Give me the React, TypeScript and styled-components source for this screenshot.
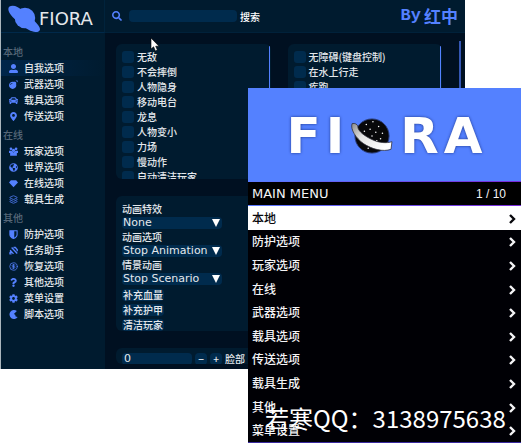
import React from "react";
import styled, { createGlobalStyle } from "styled-components";
import {
  FaUserAlt, FaBomb, FaCar, FaMapMarkerAlt, FaGlobeAmericas,
  FaQuestion, FaCog, FaSearch,
} from "react-icons/fa";
import { Layers, CircleDollarSign } from "lucide-react";

const accent = "#5481ff";
const panelBg = "#001b2f";
const fieldBg = "#002b4d";
const cjk = `"Noto Sans CJK SC", sans-serif`;
const latin = `"DejaVu Sans", "Noto Sans CJK SC", sans-serif`;

const GlobalStyle = createGlobalStyle`
  * { box-sizing: border-box; }
  body { margin: 0; background: #fff; font-family: ${cjk}; }
  button, input, select { font: inherit; color: inherit; border: 0; margin: 0; padding: 0; }
  ul { list-style: none; margin: 0; padding: 0; }
`;

const Page = styled.div`
  position: relative;
  min-height: 444px;
`;

const AppWindow = styled.div`
  display: grid;
  grid-template-columns: 104px 1fr;
  grid-template-rows: 33px auto;
  margin-right: 57px;
  border-left: 1px solid #aab6bd;
  background: #001021;
  color: #e4e8ec;
  font-size: 10px;
  font-weight: 500;
`;

const Brand = styled.div`
  display: flex;
  align-items: center;
  background: ${panelBg};
  border-right: 1px solid #00233c;
  border-bottom: 1px solid #00294a;
  padding: 5px 0 0 5px;
`;

const BrandPlanet = styled.svg`
  width: 36px;
  height: 28px;
  flex: none;
`;

const BrandName = styled.span`
  font: 400 18px/26px ${latin};
  margin-left: -3px;
  padding-top: 1px;
`;

const TopBar = styled.header`
  display: flex;
  align-items: center;
  background: ${panelBg};
  border-bottom: 1px solid #00213a;
  padding: 0 7px;
`;

const Search = styled.label`
  display: flex;
  align-items: center;
  flex: 1;
  color: #fff;
  svg { color: ${accent}; width: 10px; height: 10px; margin-right: 7px; }
`;

const SearchInput = styled.input`
  width: 108px;
  height: 12px;
  border-radius: 4px;
  background: ${fieldBg};
  margin-right: 3px;
`;

const Author = styled.div`
  display: flex;
  align-items: center;
  gap: 3px;
  color: ${accent};
  font: 700 17px/24px ${cjk};
  b { font: 700 17px/24px "Liberation Mono", monospace; }
`;

const Sidebar = styled.nav`
  display: flex;
  flex-direction: column;
  gap: 3px;
  background: ${panelBg};
  padding: 11px 0 20px;
`;

const GroupTitle = styled.div`
  height: 16px;
  line-height: 16px;
  padding-left: 2px;
  color: #566778;
`;

const NavItem = styled.button<{ $active?: boolean }>`
  display: flex;
  align-items: center;
  gap: 6px;
  width: 100%;
  height: 16px;
  line-height: 16px;
  padding-left: 8px;
  background: ${(p) => (p.$active ? "linear-gradient(90deg, #00264a, #001b2f)" : "transparent")};
  text-align: left;
  svg { color: ${accent}; width: 9px; height: 9px; flex: none; }
`;

const Content = styled.main`
  display: grid;
  grid-template-columns: 1fr 1fr 2px;
  column-gap: 17px;
  padding: 11px 4px 5px 11px;
`;

const Column = styled.div`
  display: flex;
  flex-direction: column;
  gap: 17px;
  min-width: 0;
`;

const ScrollTrack = styled.div`
  background: #3557b4;
  margin-top: -3px;
`;

const Panel = styled.section<{ $max: number; $scroll?: boolean }>`
  height: ${(p) => p.$max}px;
  overflow: hidden;
  background: ${panelBg};
  border-radius: 6px;
  padding: 5px 2px 0 6px;
  background-image: ${(p) => (p.$scroll ? `linear-gradient(${accent}, ${accent})` : "none")};
  background-size: 1px calc(100% - 4px);
  background-position: right 1px top 2px;
  background-repeat: no-repeat;
`;

const CheckRow = styled.label`
  display: flex;
  align-items: center;
  gap: 3px;
  height: 15px;
  line-height: 15px;
`;

const Check = styled.input`
  appearance: none;
  width: 12px;
  height: 12px;
  border-radius: 3px;
  background: ${fieldBg};
  &:checked { background: ${accent}; }
`;

const Field = styled.label`
  display: flex;
  flex-direction: column;
  line-height: 16px;
`;

const SelectBox = styled.span`
  display: grid;
  align-items: center;
  width: 100px;
  svg { grid-area: 1 / 1; justify-self: end; width: 8px; height: 8px; margin-right: 2px; pointer-events: none; }
`;

const Select = styled.select`
  grid-area: 1 / 1;
  appearance: none;
  width: 100%;
  height: 12px;
  padding-left: 1px;
  border-radius: 4px;
  background: ${fieldBg};
  font: 11px/12px ${latin};
`;

const Actions = styled.div`
  display: flex;
  flex-direction: column;
  align-items: flex-start;
  gap: 3px;
  padding-top: 4px;
`;

const Action = styled.button`
  height: 12px;
  line-height: 12px;
  padding: 0 1px;
  border-radius: 4px;
  background: ${fieldBg};
`;

const Stepper = styled.label`
  display: flex;
  align-items: center;
  gap: 3px;
  line-height: 12px;
`;

const NumberInput = styled.input`
  width: 70px;
  height: 12px;
  padding-left: 2px;
  border-radius: 4px;
  background: ${fieldBg};
  font: 11px/12px ${latin};
`;

const StepButton = styled.button`
  width: 12px;
  height: 12px;
  line-height: 12px;
  border-radius: 4px;
  background: ${fieldBg};
`;

const Pointer = styled.svg`
  position: absolute;
  left: 150px;
  top: 37px;
  width: 10px;
  height: 15px;
`;

const Menu = styled.aside`
  position: absolute;
  top: 88px;
  left: 248px;
  right: 1px;
  background: #000005;
  color: #f4f4f6;
  border-bottom: 1px solid #3a2aa0;
`;

const Banner = styled.div`
  display: flex;
  align-items: center;
  justify-content: center;
  gap: 5px;
  height: 93px;
  padding-top: 3px;
  background: ${accent};
  color: #fff;
  font: 700 50px/60px ${latin};
  text-shadow: 0 0 3px #1c3486;
`;

const Planet = styled.svg`
  width: 46px;
  height: 38px;
`;

const MenuHead = styled.div`
  display: flex;
  justify-content: space-between;
  align-items: center;
  height: 25px;
  padding: 0 15px 0 4px;
  background: #000;
  border-style: solid;
  border-width: 1px 0;
  border-image: linear-gradient(90deg, #5a7bff, #7a2ad8) 1;
  font: 13px/20px ${latin};
`;

const Count = styled.span`
  font: 12px/20px "Liberation Sans", sans-serif;
`;

const MenuList = styled.ul`
  display: grid;
  grid-auto-rows: 1fr;
  height: 236px;
`;

const MenuItem = styled.button<{ $active?: boolean }>`
  display: flex;
  align-items: center;
  justify-content: space-between;
  width: 100%;
  height: 100%;
  padding: 0 5px 0 4px;
  background: ${(p) => (p.$active ? "#fff" : "transparent")};
  color: ${(p) => (p.$active ? "#08080c" : "inherit")};
  font: 500 12px/20px ${cjk};
  svg { width: 8px; height: 10px; margin-top: 2px; }
`;

const Contact = styled.div`
  position: absolute;
  left: 265px;
  top: 400px;
  color: #fff;
  font: 400 24px/36px ${cjk};
  white-space: nowrap;
`;

const Diamond = () => (
  <svg viewBox="0 0 12 12" fill="currentColor"><path d="M2.5 1.500h7L12 4.500 6 11 0 4.500z" /></svg>
);
const Crescent = () => (
  <svg viewBox="0 0 12 12" fill="currentColor">
    <path d="M10.5 1.400A6 6 0 1 0 11.600 9.400L8.800 8.500 8.300 6.400 6.500 5.300 8.200 3.500z" />
  </svg>
);
const Crowd = () => (
  <svg viewBox="0 0 12 12" fill="currentColor">
    <circle cx="2.600" cy="2.400" r="1.800" />
    <circle cx="9.400" cy="2.400" r="1.800" />
    <circle cx="6" cy="4.600" r="2.200" />
    <path d="M0 5h3.200L6 7.200 8.800 5H12v3h-1.500v3.500h-9V8H0z" />
  </svg>
);
const HalfShield = () => (
  <svg viewBox="0 0 12 12">
    <path d="M1.200 1h9.600v5c0 2.600-2 4.300-4.800 5.400C3.200 10.300 1.200 8.600 1.200 6z" fill="none" stroke="currentColor" strokeWidth="1.400" />
    <path d="M1.200 1H7v10L6 11.400C3.200 10.300 1.200 8.600 1.200 6z" fill="currentColor" />
  </svg>
);
const Helper = () => (
  <svg viewBox="0 0 12 12" fill="none" stroke="currentColor" strokeWidth="1.800">
    <path d="M3.500 2l7.500 8M6 2h2.500l2.500 3v2M1.500 5.500L6 10.500M.5 10.500h3M.8 10l1.500-3" />
  </svg>
);

const groups: { title: string; items: [string, React.ReactNode][] }[] = [
  {
    title: "本地",
    items: [["自我选项", <FaUserAlt />], ["武器选项", <FaBomb />], ["载具选项", <FaCar />], ["传送选项", <FaMapMarkerAlt />]],
  },
  {
    title: "在线",
    items: [["玩家选项", <Crowd />], ["世界选项", <FaGlobeAmericas />], ["在线选项", <Diamond />], ["载具生成", <Layers />]],
  },
  {
    title: "其他",
    items: [
      ["防护选项", <HalfShield />], ["任务助手", <Helper />], ["恢复选项", <CircleDollarSign />],
      ["其他选项", <FaQuestion />], ["菜单设置", <FaCog />], ["脚本选项", <Crescent />],
    ],
  },
];

const selfToggles = ["无敌", "不会摔倒", "人物隐身", "移动电台", "龙息", "人物变小", "力场", "慢动作", "自动清洁玩家"];
const moveToggles = ["无障碍(键盘控制)", "在水上行走", "疾跑"];
const selects = [["动画特效", "None"], ["动画选项", "Stop Animation"], ["情景动画", "Stop Scenario"]];
const actions = ["补充血量", "补充护甲", "清洁玩家"];
const menuItems = ["本地", "防护选项", "玩家选项", "在线", "武器选项", "载具选项", "传送选项", "载具生成", "其他", "菜单设置"];
const stars = [[18, 8], [25, 5], [31, 10], [22, 13], [28, 16], [35, 17], [16, 15], [33, 23], [24, 20], [29, 25], [20, 33]];

function Toggles({ items }: { items: string[] }) {
  return (
    <>
      {items.map((name) => (
        <CheckRow key={name}><Check type="checkbox" />{name}</CheckRow>
      ))}
    </>
  );
}

export default function App() {
  return (
    <Page>
      <GlobalStyle />
      <AppWindow>
        <Brand>
          <BrandPlanet viewBox="0 0 36 30" fill={accent}>
            <circle cx="19" cy="14" r="11" />
            <path d="M2 2C6-1 12 2 15 5L29 17C34 22 37 26 34 28C29 31 21 26 16 22L6 13C2 9 0 5 2 2Z" />
          </BrandPlanet>
          <BrandName>FIORA</BrandName>
        </Brand>
        <TopBar>
          <Search><FaSearch /><SearchInput type="text" />搜索</Search>
          <Author><b>By</b>红中</Author>
        </TopBar>
        <Sidebar>
          {groups.map((g, gi) => (
            <div key={g.title}>
              <GroupTitle>{g.title}</GroupTitle>
              {g.items.map(([name, icon], i) => (
                <NavItem key={name} $active={gi === 0 && i === 0}>{icon}{name}</NavItem>
              ))}
            </div>
          ))}
        </Sidebar>
        <Content>
          <Column>
            <Panel $max={135} $scroll><Toggles items={selfToggles} /></Panel>
            <Panel $max={135}>
              {selects.map(([label, value]) => (
                <Field key={label}>
                  {label}
                  <SelectBox>
                    <Select defaultValue={value}><option>{value}</option></Select>
                    <svg viewBox="0 0 8 8" fill="#fff"><path d="M0 0h8L4 8z" /></svg>
                  </SelectBox>
                </Field>
              ))}
              <Actions>
                {actions.map((a) => <Action key={a}>{a}</Action>)}
              </Actions>
            </Panel>
            <Panel $max={16}>
              <Stepper>
                <NumberInput type="text" defaultValue="0" />
                <StepButton>−</StepButton>
                <StepButton>+</StepButton>
                脸部
              </Stepper>
            </Panel>
          </Column>
          <Column>
            <Panel $max={135} $scroll><Toggles items={moveToggles} /></Panel>
          </Column>
          <ScrollTrack />
        </Content>
      </AppWindow>
      <Pointer viewBox="0 0 10 15" fill="#fff" stroke="#000" strokeWidth="0.6">
        <path d="M1 1v11l2.600-2.200L5.400 14l2-.9L5.700 9.200H9z" />
      </Pointer>
      <Menu>
        <Banner>
          <span>F</span>
          <span>I</span>
          <Planet viewBox="0 0 48 40">
            <defs>
              <linearGradient id="ring" x1="0" y1="0" x2="1" y2="0.6">
                <stop offset="0" stopColor="#8a8a8a" />
                <stop offset="0.4" stopColor="#e4e4e4" />
                <stop offset="1" stopColor="#fff" />
              </linearGradient>
            </defs>
            <circle cx="24" cy="20" r="18" fill="#08080a" stroke="#2c3f80" strokeWidth="1" />
            {stars.map(([x, y]) => <circle key={`${x}-${y}`} cx={x} cy={y} r="0.8" fill="#fff" />)}
            <path
              d="M3 7C6 6 9 8 9 10C9 15 17 21 27 25C35 28 42 27 45 26L44 34C36 37 24 34 15 28C7 22 1 13 3 7Z"
              fill="url(#ring)" stroke="#2a2a35" strokeWidth="0.8"
            />
          </Planet>
          <span>R</span>
          <span>A</span>
        </Banner>
        <MenuHead><span>MAIN MENU</span><Count>1 / 10</Count></MenuHead>
        <MenuList>
          {menuItems.map((name, i) => (
            <li key={name}>
              <MenuItem $active={i === 0}>
                {name}
                <svg viewBox="0 0 8 10" fill="none" stroke="currentColor" strokeWidth="2.400"><path d="M2 1l4 4-4 4" /></svg>
              </MenuItem>
            </li>
          ))}
        </MenuList>
      </Menu>
      <Contact>若寒QQ：3138975638</Contact>
    </Page>
  );
}
